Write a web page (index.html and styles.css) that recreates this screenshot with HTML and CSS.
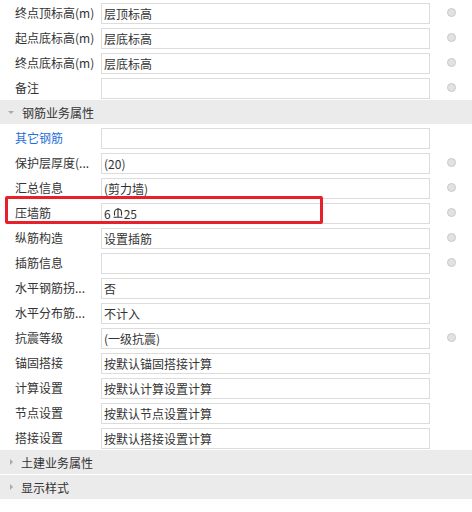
FILE: index.html
```html
<!DOCTYPE html>
<html lang="zh">
<head>
    <meta charset="UTF-8">
    <title>属性</title>
    <link rel="stylesheet" href="styles.css">
</head>
<body>

<div class="panel">
    <div class="row"><span class="label">终点顶标高(m)</span><span class="box">层顶标高</span><span class="pick"><i class="dot"></i></span></div>
    <div class="row"><span class="label">起点底标高(m)</span><span class="box">层底标高</span><span class="pick"><i class="dot"></i></span></div>
    <div class="row"><span class="label">终点底标高(m)</span><span class="box">层底标高</span><span class="pick"><i class="dot"></i></span></div>
    <div class="row"><span class="label">备注</span><span class="box"></span><span class="pick"><i class="dot"></i></span></div>

    <div class="group open"><span class="arrow"></span>钢筋业务属性</div>
    <div class="row"><span class="label link">其它钢筋</span><span class="box"></span><span class="pick"></span></div>
    <div class="row"><span class="label">保护层厚度(...</span><span class="box">(20)</span><span class="pick"><i class="dot"></i></span></div>
    <div class="row"><span class="label">汇总信息</span><span class="box">(剪力墙)</span><span class="pick"><i class="dot"></i></span></div>
    <div class="row marked"><span class="label">压墙筋</span><span class="box">6<svg class="grade" width="10" height="11" viewBox="0 0 10 11"><path d="M1.5 8.5V5.5a3.5 3.5 0 0 1 7 0v3M5 1v9M0.5 10.2h9" fill="none" stroke="#333" stroke-width="1.1"/></svg>25</span><span class="pick"><i class="dot"></i></span><span class="highlight"></span></div>
    <div class="row"><span class="label">纵筋构造</span><span class="box">设置插筋</span><span class="pick"><i class="dot"></i></span></div>
    <div class="row"><span class="label">插筋信息</span><span class="box"></span><span class="pick"><i class="dot"></i></span></div>
    <div class="row"><span class="label">水平钢筋拐...</span><span class="box">否</span><span class="pick"></span></div>
    <div class="row"><span class="label">水平分布筋...</span><span class="box">不计入</span><span class="pick"></span></div>
    <div class="row"><span class="label">抗震等级</span><span class="box">(一级抗震)</span><span class="pick"><i class="dot"></i></span></div>
    <div class="row"><span class="label">锚固搭接</span><span class="box">按默认锚固搭接计算</span><span class="pick"></span></div>
    <div class="row"><span class="label">计算设置</span><span class="box">按默认计算设置计算</span><span class="pick"></span></div>
    <div class="row"><span class="label">节点设置</span><span class="box">按默认节点设置计算</span><span class="pick"></span></div>
    <div class="row"><span class="label">搭接设置</span><span class="box">按默认搭接设置计算</span><span class="pick"></span></div>

    <div class="group"><span class="arrow"></span>土建业务属性</div>
    <div class="group"><span class="arrow"></span>显示样式</div>
</div>

</body>
</html>
```

FILE: styles.css
```css
body {
    margin: 0;
    background-color: #fff;
    font-family: "Noto Sans CJK SC", "Liberation Sans", sans-serif;
    font-size: 12px;
    color: #333;
}
.panel {
    width: 472px;
}
.row {
    position: relative;
    display: flex;
    align-items: center;
    height: 25px;
}
.label {
    width: 86px;
    padding-left: 15px;
    white-space: nowrap;
    overflow: hidden;
}
.label.link {
    color: #1f6fd8;
}
.box {
    display: flex;
    align-items: center;
    box-sizing: border-box;
    width: 329px;
    height: 21px;
    margin-top: 1px;
    padding-left: 2px;
    border: 1px solid #dcdcdc;
    background-color: #fff;
    white-space: nowrap;
}
.grade {
    margin: 0 1px 2px 2px;
}
.pick {
    flex: 1;
    display: flex;
    justify-content: center;
    padding-left: 1px;
}
.dot {
    box-sizing: border-box;
    width: 9px;
    height: 9px;
    border-radius: 50%;
    background-color: #e2e2e4;
    border: 1px solid #c9c9cc;
}
.highlight {
    position: absolute;
    left: 5px;
    top: -4px;
    width: 318px;
    height: 28px;
    box-sizing: border-box;
    border: 3px solid #e8202c;
    border-radius: 2px;
}
.group {
    display: flex;
    align-items: center;
    height: 24px;
    margin-bottom: 1px;
    background-color: #ebebeb;
    color: #333;
}
.arrow {
    width: 0;
    height: 0;
    margin: 0 8px 0 10px;
    border-top: 3px solid transparent;
    border-bottom: 3px solid transparent;
    border-left: 3px solid #aaa;
}
.group.open .arrow {
    margin: 0 8px 0 8px;
    border-left: 3px solid transparent;
    border-right: 3px solid transparent;
    border-top: 3px solid #aaa;
    border-bottom: 0;
}
```
